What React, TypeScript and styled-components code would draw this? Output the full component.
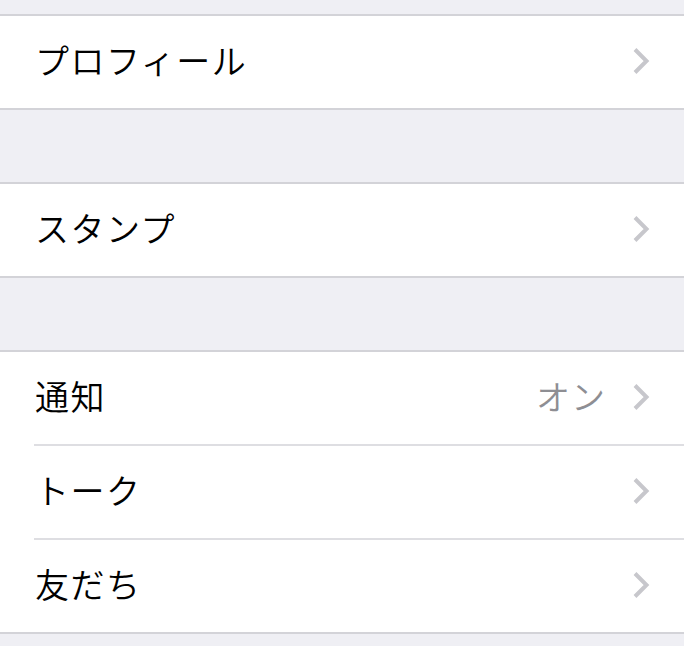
import React from "react";
import styled, { createGlobalStyle } from "styled-components";

const Global = createGlobalStyle`
  html, body { margin: 0; padding: 0; background: #efeff4; }
  body { font-family: "Noto Sans CJK JP", "Noto Sans", sans-serif; }
`;

const Page = styled.div`
  width: 684px;
  min-height: 646px;
  background: #efeff4;
  padding-top: 14px;
  display: flex;
  flex-direction: column;
  gap: 72px;
`;

const Section = styled.div`
  background: #fff;
  border-top: 2px solid #d3d3d8;
  border-bottom: 2px solid #d3d3d8;
  display: flex;
  flex-direction: column;
`;

const Row = styled.div<{ $sep?: boolean }>`
  height: 92px;
  display: flex;
  align-items: center;
  padding-left: 35px;
  ${(p) =>
    p.$sep
      ? `border-top: 2px solid #dedee2; margin-left: 34px; padding-left: 1px;`
      : ""}
`;

const Label = styled.span`
  flex: 1;
  font-size: 34px;
  font-weight: 350;
  line-height: 40px;
  color: #000;
  letter-spacing: 1.5px;
  margin-top: -5px;
`;

const Value = styled.span`
  font-size: 34px;
  font-weight: 350;
  line-height: 40px;
  color: #8e8e93;
  letter-spacing: 1px;
  margin-right: 26px;
  margin-top: -5px;
`;

const ChevronBox = styled.span`
  width: 18px;
  height: 28px;
  margin-right: 34px;
  margin-top: -3px;
  display: flex;
  align-items: center;
  justify-content: center;
`;

const Chevron = () => (
  <ChevronBox>
    <svg width="18" height="28" viewBox="0 0 18 28">
      <polyline
        points="3,2.5 14.5,14 3,25.5"
        fill="none"
        stroke="#c7c7cc"
        strokeWidth="4"
        strokeLinecap="butt"
        strokeLinejoin="miter"
      />
    </svg>
  </ChevronBox>
);

type Item = { label: string; value?: string };

const sections: Item[][] = [
  [{ label: "プロフィール" }],
  [{ label: "スタンプ" }],
  [{ label: "通知", value: "オン" }, { label: "トーク" }, { label: "友だち" }],
];

export default function App() {
  return (
    <>
      <Global />
      <Page>
        {sections.map((items, si) => (
          <Section key={si}>
            {items.map((it, i) => (
              <Row key={it.label} $sep={i > 0}>
                <Label>{it.label}</Label>
                {it.value && <Value>{it.value}</Value>}
                <Chevron />
              </Row>
            ))}
          </Section>
        ))}
      </Page>
    </>
  );
}
